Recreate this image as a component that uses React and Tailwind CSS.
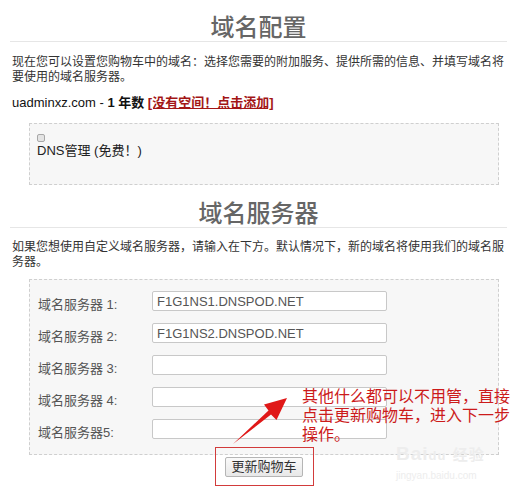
import React from 'react';

const servers = [
    { label: '域名服务器 1:', value: 'F1G1NS1.DNSPOD.NET' },
    { label: '域名服务器 2:', value: 'F1G1NS2.DNSPOD.NET' },
    { label: '域名服务器 3:', value: '' },
    { label: '域名服务器 4:', value: '' },
    { label: '域名服务器5:', value: '' },
];

const font = { fontFamily: '"Liberation Sans", Arial, "Noto Sans CJK SC", sans-serif' };

const App = () => {
    return (
        <div
            className="relative w-[517px] h-[493px] overflow-hidden bg-white px-[10px] text-[#333]"
            style={font}
        >
            <h1 className="pt-[14px] text-center text-[24px] leading-[27px] font-medium text-[#666] border-b border-[#e6e6e6]">
                域名配置
            </h1>
            <p className="mt-[13px] pl-[2px] text-[12px] leading-[15px]">
                现在您可以设置您购物车中的域名：选择您需要的附加服务、提供所需的信息、并填写域名将要使用的域名服务器。
            </p>
            <div className="mt-[10px] pl-[2px] text-[13px] leading-[16px] text-[#111]">
                uadminxz.com - <b>1 年数</b>{' '}
                <a href="#" className="font-bold text-[#a31515] underline">[没有空间！点击添加]</a>
            </div>

            <div className="mt-[12px] ml-[19px] w-[470px] h-[62px] border border-dashed border-[#cfcfcf] bg-[#f7f7f7] pl-[7px] pt-[10px]">
                <input
                    type="checkbox"
                    className="block w-[8px] h-[8px] m-0 appearance-none rounded-[2px] border border-[#a8a8a8] bg-[#e4e4e4]"
                />
                <div className="mt-[1px] text-[13px] leading-[16px] text-[#222]">DNS管理 (免费！)</div>
            </div>

            <h2 className="mt-[15px] text-center text-[24px] leading-[27px] font-medium text-[#666] border-b border-[#e6e6e6]">
                域名服务器
            </h2>
            <p className="mt-[12px] pl-[2px] text-[12px] leading-[15px]">
                如果您想使用自定义域名服务器，请输入在下方。默认情况下，新的域名将使用我们的域名服务器。
            </p>

            <div className="mt-[9px] ml-[19px] w-[470px] border border-dashed border-[#cfcfcf] bg-[#f7f7f7] pl-[8px] pt-[11px] pb-[15px] flex flex-col gap-[12px]">
                {servers.map((s) => (
                    <div key={s.label} className="flex h-[20px]">
                        <span className="w-[114px] pt-[6px] text-[13px] leading-[16px] text-[#555]">{s.label}</span>
                        <input
                            type="text"
                            defaultValue={s.value}
                            className="w-[235px] h-[20px] border border-[#c8c8c8] rounded-[2px] bg-white px-[4px] text-[13px] text-[#555] outline-none"
                            style={font}
                        />
                    </div>
                ))}
            </div>

            <div className="ml-[19px] w-[470px] flex justify-center pt-[2px]">
                <button className="h-[20px] px-[5px] border border-[#b5b5b5] rounded-[2px] bg-gradient-to-b from-[#fafafa] to-[#e8e8e8] text-[13px] leading-[16px] text-[#333]">
                    更新购物车
                </button>
            </div>

            {/* annotation overlay */}
            <div className="absolute left-[215px] top-[447px] w-[99px] h-[39px] border border-[#d23b3b]" />
            <div className="absolute left-[302px] top-[387px] w-[215px] text-[16px] leading-[19px] text-[#cc1b1b]">
                其他什么都可以不用管，直接
                <br />
                点击更新购物车，进入下一步
                <br />
                操作。
            </div>
            <svg className="absolute left-0 top-0 pointer-events-none" width="517" height="493">
                <polygon
                    points="233,444 271,414.5 276.5,420 287,398 264,404.5 268.5,410.5"
                    fill="#e01818"
                />
            </svg>

            {/* watermark */}
            <div className="absolute left-[396px] top-[444px] text-[#ededed] pointer-events-none">
                <div className="text-[19px] leading-[20px] font-bold tracking-[1px]">
                    Bai<span className="text-[13px]">du</span> <span className="text-[15px]">经验</span>
                </div>
                <div className="mt-[4px] text-[10px] leading-[12px]">jingyan.baidu.com</div>
            </div>
        </div>
    );
};

export default App;
